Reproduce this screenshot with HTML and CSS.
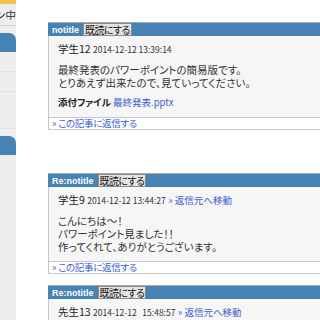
FILE: index.html
```html
<!DOCTYPE html>
<html lang="ja">
<head>
    <meta charset="UTF-8">
    <title>掲示板</title>
    <link rel="stylesheet" href="styles.css">
</head>
<body>
    <div class="page">
        <aside class="side">
            <div class="side-top"></div>
            <div class="side-user"><span>ログイン中</span></div>
            <div class="side-tab"></div>
            <div class="side-row"></div>
            <div class="side-row"></div>
            <div class="side-row side-row-tall"></div>
            <div class="side-tab"></div>
        </aside>

        <main class="board">
            <div class="post post-root">
                <div class="post-head">
                    <span class="post-title">notitle</span>
                    <button class="read-btn">既読にする</button>
                </div>
                <div class="post-body">
                    <div class="post-meta">
                        <span class="author">学生12</span>
                        <span class="date">2014-12-12 13:39:14</span>
                    </div>
                    <div class="post-text">
                        <div class="line">最終発表のパワーポイントの簡易版です。</div>
                        <div class="line">とりあえず出来たので、見ていってください。</div>
                    </div>
                    <div class="attach"><b>添付ファイル</b> <a href="#">最終発表.pptx</a></div>
                </div>
                <div class="post-foot"><a href="#">» この記事に返信する</a></div>
            </div>

            <div class="post">
                <div class="post-head">
                    <span class="post-title">Re:notitle</span>
                    <button class="read-btn">既読にする</button>
                </div>
                <div class="post-body">
                    <div class="post-meta">
                        <span class="author">学生9</span>
                        <span class="date">2014-12-12 13:44:27</span>
                        <a href="#">» 返信元へ移動</a>
                    </div>
                    <div class="post-text">
                        <div class="line">こんにちは～！</div>
                        <div class="line">パワーポイント見ました！！</div>
                        <div class="line">作ってくれて、ありがとうございます。</div>
                    </div>
                </div>
                <div class="post-foot"><a href="#">» この記事に返信する</a></div>
            </div>

            <div class="post">
                <div class="post-head">
                    <span class="post-title">Re:notitle</span>
                    <button class="read-btn">既読にする</button>
                </div>
                <div class="post-body">
                    <div class="post-meta">
                        <span class="author">先生13</span>
                        <span class="date">2014-12-12&nbsp;&nbsp; 15:48:57</span>
                        <a href="#">» 返信元へ移動</a>
                    </div>
                </div>
            </div>
        </main>
    </div>
</body>
</html>
```

FILE: styles.css
```css
body {
    margin: 0;
    background-color: white;
    font-family: 'Noto Sans CJK JP', sans-serif;
    font-feature-settings: "palt";
    color: #333;
    overflow: hidden;
    height: 320px;
}

a {
    color: #3a5fcd;
    text-decoration: none;
}

.page {
    display: flex;
    align-items: flex-start;
}

/* left menu, mostly cut off */
.side {
    width: 16px;
    flex-shrink: 0;
    height: 320px;
    background-color: #eeeeee;
    display: flex;
    flex-direction: column;
    overflow: hidden;
}

.side-top {
    height: 4px;
    background-color: #f2c14e;
}

.side-user {
    height: 21px;
    border-bottom: 1px solid #cfcfcf;
    display: flex;
    justify-content: flex-end;
    align-items: center;
    font-size: 10.5px;
    white-space: nowrap;
}

.side-tab {
    height: 19px;
    margin-top: 7px;
    background-color: #4682b4;
    border-top-right-radius: 7px;
}

.side-row {
    height: 19px;
    border-bottom: 1px solid #e2e2e2;
}

.side-row-tall {
    height: 36px;
}

.board {
    padding: 22px 0 0 32px;
}

.post {
    width: 330px;
    margin-bottom: 11px;
}

.post-root {
    margin-bottom: 43px;
}

.post-head {
    height: 13px;
    border-top: 1px solid #a8a8a8;
    background-color: #4682b4;
    display: flex;
    align-items: center;
    gap: 4px;
    padding-left: 4px;
}

.post-title {
    font-family: 'Liberation Sans', Arial, sans-serif;
    font-size: 9px;
    font-weight: bold;
    color: white;
}

.read-btn {
    font-family: 'Noto Sans CJK JP', sans-serif;
    font-feature-settings: "palt";
    font-size: 10px;
    letter-spacing: -0.6px;
    line-height: 11px;
    height: 13px;
    padding: 0 1px;
    margin: 0;
    border: 1px solid #8a8a8a;
    background-color: #e4e4e4;
    color: #111;
}

.post-body {
    background-color: #f6f6f6;
    border-left: 1px solid #c8c8c8;
    border-right: 1px solid #c8c8c8;
    padding: 6px 9px 8px;
    font-size: 10.5px;
}

.post-meta {
    height: 14px;
    line-height: 14px;
    white-space: nowrap;
}

.author {
    font-size: 10.5px;
    color: #222;
}

.date {
    font-size: 8.5px;
    color: #333;
}

.post-meta a {
    font-size: 9.5px;
}

.post-text {
    margin-top: 7px;
}

.line {
    height: 13px;
    line-height: 13px;
    white-space: nowrap;
}

.attach {
    margin-top: 7px;
    height: 13px;
    line-height: 13px;
    font-size: 9.5px;
}

.attach b {
    color: #222;
}

.post-foot {
    background-color: white;
    border: 1px solid #c8c8c8;
    padding-left: 3px;
    height: 11px;
    line-height: 11px;
    font-size: 9.5px;
    letter-spacing: -0.3px;
}
```
